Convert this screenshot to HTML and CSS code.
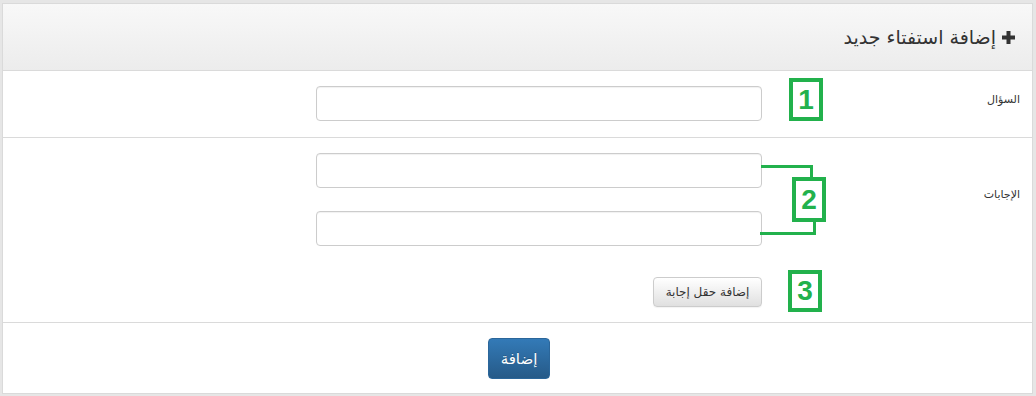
FILE: index.html
```
<html lang="ar">
<head>
    <meta charset="UTF-8">
    <title>إضافة استفتاء جديد</title>
    <link rel="stylesheet" href="styles.css">
</head>
<body>
    <div class="panel" dir="rtl">
        <div class="panel-heading">
            <svg class="plus" width="13" height="13" viewBox="0 0 13 13"><path d="M4.5 0h4v4.5h4.5v4h-4.5v4.5h-4v-4.5h-4.5v-4h4.5z" fill="#333"/></svg>
            <span>إضافة استفتاء جديد</span>
        </div>
        <div class="form-row first">
            <label class="row-label">السؤال</label>
            <div class="row-field">
                <input type="text" class="form-control">
            </div>
        </div>
        <div class="form-row">
            <label class="row-label answers">الإجابات</label>
            <div class="row-field">
                <input type="text" class="form-control">
                <input type="text" class="form-control second">
                <button class="btn btn-default">إضافة حقل إجابة</button>
            </div>
        </div>
        <div class="panel-footer">
            <button class="btn btn-primary">إضافة</button>
        </div>

        <!-- annotations -->
        <div class="mark mark-1">1</div>
        <div class="mark mark-2">2</div>
        <div class="mark mark-3">3</div>
        <div class="bracket bracket-top"></div>
        <div class="bracket bracket-bottom"></div>
    </div>
</body>
</html>
```

FILE: styles.css
```
body {margin: 0; padding: 3px 3px 2px 2px; background-color: #e6e6e6; font-family: "DejaVu Sans", Tahoma, sans-serif; color: #333;}
.panel {position: relative; background-color: #fff; border: 1px solid #dadada; height: 391px; box-sizing: border-box;}
.panel-heading {height: 67px; box-sizing: border-box; border-bottom: 1px solid #dadada; background: linear-gradient(to bottom, #f8f8f8, #ececec); display: flex; align-items: center; gap: 6px; padding: 0 17px 0 0; font-size: 19px; color: #333;}
.plus {flex: none; margin-top: 1px;}
.form-row {display: flex; border-bottom: 1px solid #dadada; padding: 15px 0 15px 0;}
.form-row.first {padding: 15px 0 16px 0;}
.row-label {width: 270px; box-sizing: border-box; padding-right: 12px; font-size: 11px; line-height: 20px; margin-top: 4px; color: #333;}
.row-label.answers {margin-top: 32px;}
.row-field {width: 446px; display: flex; flex-direction: column; align-items: flex-start;}
.form-control {width: 446px; height: 35px; box-sizing: border-box; border: 1px solid #cccccc; border-radius: 4px; box-shadow: inset 0 1px 1px rgba(0,0,0,0.06); background: #fff; margin: 0; padding: 6px 12px;}
.form-control.second {margin-top: 23px;}
.btn {font-family: "DejaVu Sans", Tahoma, sans-serif; border-radius: 4px; cursor: pointer;}
.btn-default {margin-top: 31px; height: 30px; width: 109px; padding: 0; font-size: 12px; color: #333; border: 1px solid #cccccc; background: linear-gradient(to bottom, #ffffff, #e0e0e0); box-shadow: inset 0 1px 0 rgba(255,255,255,.15), 0 1px 1px rgba(0,0,0,.05);}
.panel-footer {display: flex; justify-content: center; padding: 15px 0 0 0;}
.btn-primary {width: 62px; height: 41px; padding: 0; margin-left: 3px; font-size: 15px; color: #fff; border: 1px solid #2b669a; background: linear-gradient(to bottom, #337ab7, #265a88); text-shadow: 0 -1px 0 rgba(0,0,0,.2);}

.mark {position: absolute; box-sizing: border-box; border: 4px solid #22b14c; color: #22b14c; font-family: "Liberation Sans", Arial, sans-serif; font-weight: bold; font-size: 28px; display: flex; align-items: center; justify-content: center; background: #fff;}
.mark-1 {left: 786px; top: 74px; width: 34px; height: 43px;}
.mark-2 {left: 789px; top: 173px; width: 34px; height: 45px;}
.mark-3 {left: 785px; top: 266px; width: 34px; height: 42px;}
.bracket {position: absolute; box-sizing: border-box; border-color: #22b14c; border-style: solid; border-width: 0;}
.bracket-top {left: 758px; top: 161px; width: 52px; height: 12px; border-top-width: 3px; border-right-width: 3px;}
.bracket-bottom {left: 757px; top: 218px; width: 56px; height: 13px; border-bottom-width: 3px; border-right-width: 3px;}
```
